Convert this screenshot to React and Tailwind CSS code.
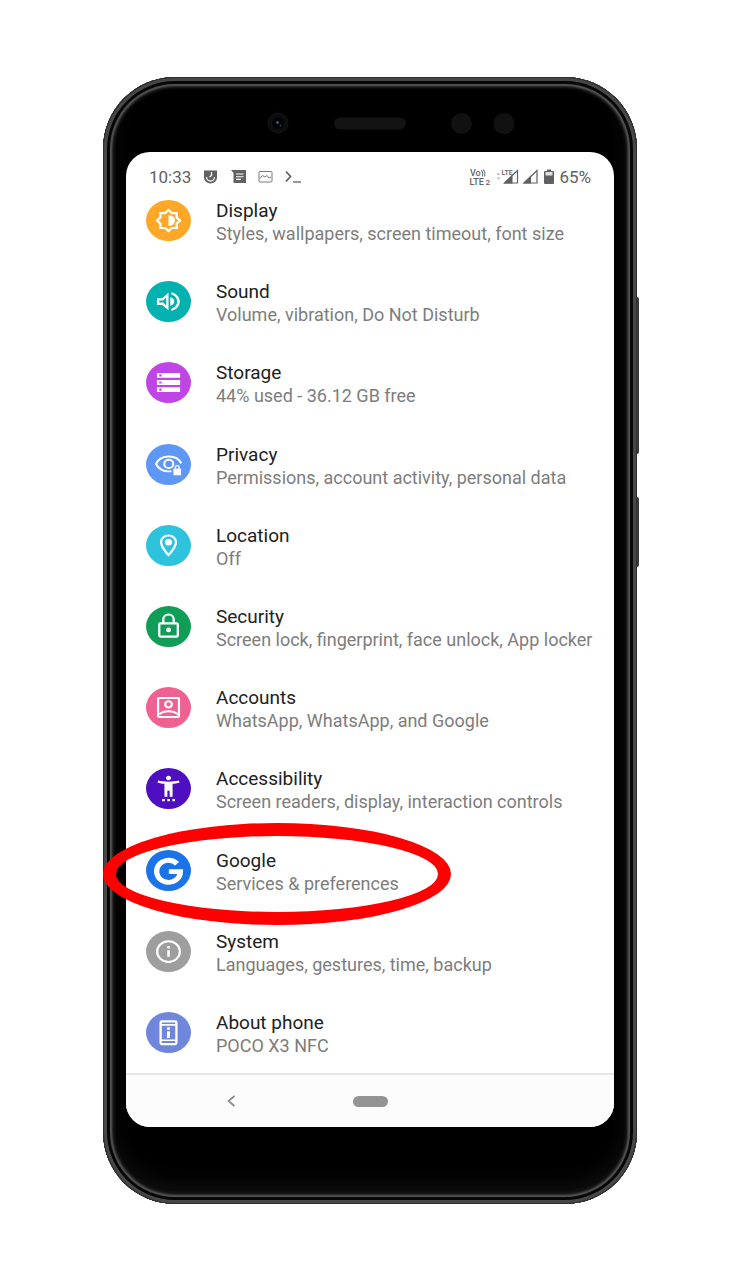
const icons = {
  display: (
    <>
      <path d="M20 8.69V4h-4.69L12 .69 8.69 4H4v4.69L.69 12 4 15.31V20h4.69L12 23.31 15.31 20H20v-4.69L23.31 12 20 8.69zm-2 5.79V18h-3.52L12 20.48 9.52 18H6v-3.52L3.52 12 6 9.52V6h3.52L12 3.52 14.48 6H18v3.52L20.48 12 18 14.48z" />
      <path d="M12 7v10c3.500 0 5.500-2.240 5.500-5s-2-5-5.500-5z" />
    </>
  ),
  sound: (
    <path d="M2 8.800v6.400h4.500l5.500 5V3.800l-5.500 5H2zm8-.6v7.600L7.330 13H4v-2h3.330L10 8.200zM17 12c0-1.770-1.020-3.290-3.500-4.030v8.050c2.480-.73 3.500-2.250 3.500-4.020zM14.500 3.230v2.060c2.890.86 5 3.540 5 6.710s-2.110 5.850-5 6.710v2.060c4.010-.91 7.200-4.490 7.200-8.770s-3.190-7.860-7.200-8.770z" />
  ),
  storage: (
    <path d="M2 21h20v-4.600H2V21zm2-3.300h2v2H4v-2zM2 3v4.600h20V3H2zm4 3.300H4v-2h2v2zM2 14.300h20V9.700H2v4.600zM4 11h2v2H4v-2z" />
  ),
  privacy: (
    <>
      <g fill="none" stroke="#fff" strokeWidth="1.800">
        <path d="M14.500 18.200C7.500 19.500 3 15.500 1.200 11.500 4.500 3 18.500 1.500 23 11" />
        <circle cx="12.200" cy="11.400" r="3.900" />
        <path d="M17.900 16v-1.300a1.600 1.600 0 0 1 3.200 0V16" strokeWidth="1.200" />
      </g>
      <rect x="16.200" y="15.700" width="6.600" height="6.500" rx="0.800" />
    </>
  ),
  location: (
    <>
      <path d="M12 1.500c-4.100 0-7.400 3.300-7.400 7.400C4.600 14.500 12 22.500 12 22.500s7.400-8 7.400-13.600c0-4.100-3.300-7.400-7.400-7.400zM6.600 8.900c0-3 2.400-5.400 5.400-5.400s5.400 2.400 5.400 5.400c0 3.100-3.100 7.600-5.400 10.500-2.300-2.900-5.400-7.500-5.400-10.500z" />
      <circle cx="12" cy="8.900" r="3" />
    </>
  ),
  security: (
    <>
      <g fill="none" stroke="#fff" strokeWidth="2">
        <rect x="4" y="9" width="16" height="12.500" rx="1" />
        <path d="M7.500 9V5.200a4.500 4.500 0 0 1 9 0V9" />
      </g>
      <circle cx="12" cy="15.200" r="2.200" />
    </>
  ),
  accounts: (
    <g fill="none" stroke="#fff" strokeWidth="1.900">
      <rect x="3" y="3" width="18" height="18" rx="1" />
      <circle cx="12" cy="9" r="2.900" />
      <path d="M4 18.500c4-4 12-4 16 0" />
    </g>
  ),
  accessibility: (
    <path d="M21 4.500c-2.610.7-6.170 1-9 1s-6.390-.3-9-1l-.5 2c1.860.5 4.500.830 6 1V19.800h2.500v-5.800h2v5.800h2.500V7.500c1.500-.17 4.140-.5 6-1l-.5-2zM12 4.200c1.300 0 2.200-1 2.200-2.100S13.300 0 12 0s-2.200 1-2.200 2.100.9 2.100 2.200 2.100zM6.500 24h2.300v-2.200H6.500V24zm4.400 0h2.300v-2.200h-2.300V24zm4.400 0h2.300v-2.200h-2.300V24z" />
  ),
  google: (
    <path
      d="M19.400 5.600A10.200 10.400 0 1 0 22.200 13H12.300"
      fill="none"
      stroke="#fff"
      strokeWidth="4.600"
    />
  ),
  system: (
    <>
      <circle cx="12" cy="12" r="9.800" fill="none" stroke="#fff" strokeWidth="1.900" />
      <rect x="10.900" y="10.800" width="2.200" height="6.200" />
      <rect x="10.900" y="6.800" width="2.200" height="2.300" />
    </>
  ),
  phone: (
    <>
      <rect x="5.200" y="1.500" width="13.600" height="21.500" rx="1" fill="none" stroke="#fff" strokeWidth="2" />
      <path d="M5 4h14v1.600H5zM5 18.500h14v1.600H5zM10.700 10.700H13.200v6.400h-2.500zM10.700 7H13.200v2.300h-2.500z" />
    </>
  ),
};

const settings = [
  { icon: "display", color: "fill-[#ffa726]", title: "Display", summary: "Styles, wallpapers, screen timeout, font size" },
  { icon: "sound", color: "fill-[#03b2ae]", title: "Sound", summary: "Volume, vibration, Do Not Disturb" },
  { icon: "storage", color: "fill-[#bf46e4]", title: "Storage", summary: "44% used - 36.12 GB free" },
  { icon: "privacy", color: "fill-[#5e97f6]", title: "Privacy", summary: "Permissions, account activity, personal data" },
  { icon: "location", color: "fill-[#2ec3dc]", title: "Location", summary: "Off" },
  { icon: "security", color: "fill-[#0f9d58]", title: "Security", summary: "Screen lock, fingerprint, face unlock, App locker" },
  { icon: "accounts", color: "fill-[#f06090]", title: "Accounts", summary: "WhatsApp, WhatsApp, and Google" },
  { icon: "accessibility", color: "fill-[#4d0fc0]", title: "Accessibility", summary: "Screen readers, display, interaction controls" },
  { icon: "google", color: "fill-[#1a73e8]", title: "Google", summary: "Services & preferences", circled: true },
  { icon: "system", color: "fill-[#9e9e9e]", title: "System", summary: "Languages, gestures, time, backup" },
  { icon: "phone", color: "fill-[#6e86dc]", title: "About phone", summary: "POCO X3 NFC" },
];

function SettingRow({ icon, color, title, summary, circled }) {
  return (
    <li className="relative">
      <a href={`#${icon}`} className="flex items-center gap-[25px]">
        <svg className="h-[41px] w-[45px] shrink-0" viewBox="0 0 45 41" aria-hidden="true">
          <ellipse cx="22.500" cy="20.500" rx="22.500" ry="20.500" className={color} />
          <g transform="translate(8.600 7.800) scale(1.160 1.060)" fill="#fff">
            {icons[icon]}
          </g>
        </svg>
        <span className="flex flex-col pt-0.5">
          <span className="text-[19px] leading-6 text-[#212121]">{title}</span>
          <span className="text-[18px] leading-[21px] whitespace-nowrap text-[#7d7d7d]">{summary}</span>
        </span>
      </a>
      {circled && (
        <span className="pointer-events-none absolute top-[-24px] left-[-43px] h-[102px] w-[348px] rounded-[50%] border-[13px] border-[#ff0000]" />
      )}
    </li>
  );
}

function StatusBar() {
  return (
    <header className="flex h-[45px] items-start justify-between pt-[13px] pr-[23px] pl-[23px] text-[17px] leading-6 text-[#616161]">
      <div className="flex items-center">
        <time>10:33</time>
        <svg className="ml-3 h-4 w-[100px]" viewBox="0 0 100 16" aria-hidden="true">
          <path d="M1 1.500h13v7a6.500 6 0 0 1-13 0z" fill="#616161" />
          <path d="M3.500 8a4 4 0 0 0 8 0M8.500 3v3.500l-2 1.500" fill="none" stroke="#fff" strokeWidth="1.300" />
          <path d="M28 1h15v13H30.500V4z" fill="#616161" />
          <path d="M33 5h7.500M33 7.700h7.500M33 10.400h5" stroke="#fff" strokeWidth="1.100" />
          <rect x="56" y="2.500" width="13" height="10.500" rx="1" fill="none" stroke="#7a7a7a" />
          <path d="M57 9.500l2.500-3 2.500 1.500 2-1.500 2 2.500 2-1" fill="none" stroke="#7a7a7a" />
          <path d="M83 2.500l4.500 5-4.500 5" fill="none" stroke="#616161" strokeWidth="1.700" />
          <path d="M90 13h8" stroke="#616161" strokeWidth="1.300" />
        </svg>
      </div>
      <div className="flex items-center gap-1">
        <svg className="h-4 w-[86px]" viewBox="0 0 86 16" aria-hidden="true">
          <g fill="#616161" fontFamily="Roboto, sans-serif" fontWeight="500">
            <text x="1" y="7" fontSize="9">Vo</text>
            <text x="0.500" y="15.500" fontSize="9">LTE</text>
            <text x="16.500" y="15.500" fontSize="8">2</text>
            <text x="32.500" y="6" fontSize="7">LTE</text>
          </g>
          <path d="M12.500 1q2 3 1 6.500M14.500 0.500q2.500 4 1 7" fill="none" stroke="#616161" />
          <path d="M27.500 6l2-2.500 2 2.500zM27.500 8.500l2 2.500 2-2.500z" fill="#bdbdbd" />
          <path d="M34.500 14.500l9-8.500v8.500zM54 14.500l8-8v8z" fill="#616161" />
          <path d="M35.500 14l13-12.500V14zM55 14L68 1.500V14z" fill="none" stroke="#616161" strokeWidth="1.200" />
          <rect x="75" y="2" width="10" height="13" rx="1" fill="#616161" />
          <path d="M78 0.500h4V3h-4z" fill="#616161" />
          <path d="M76.500 3h7v3.500h-7z" fill="#e0e0e0" />
        </svg>
        <span>65%</span>
      </div>
    </header>
  );
}

function FrontSensors() {
  return (
    <svg className="h-[75px] w-full" viewBox="0 0 534 75" aria-hidden="true">
      <circle cx="175" cy="46" r="10" fill="#0d0d0d" stroke="#141414" />
      <circle cx="175" cy="46" r="6" fill="#020305" />
      <circle cx="174.500" cy="45.500" r="1.200" fill="#2c7c9c" />
      <circle cx="177.500" cy="48.500" r="1" fill="#17465f" />
      <rect x="231" y="40.500" width="72" height="12" rx="6" fill="#131313" />
      <circle cx="358.500" cy="46.500" r="10.500" fill="#111" />
      <circle cx="401" cy="46.500" r="10.500" fill="#111" />
    </svg>
  );
}

export default function App() {
  return (
    <main className="flex min-h-screen items-start justify-center bg-white pt-[77px] pr-0.5 pb-[76px] font-[Roboto,sans-serif]">
      <div className="relative w-full max-w-[534px]">
        <span className="absolute top-[220px] -right-0.5 h-[157px] w-1 rounded-sm bg-[#3a3a3a]" />
        <span className="absolute top-[420px] -right-0.5 h-[70px] w-1 rounded-sm bg-[#3a3a3a]" />
        <div className="relative rounded-[72px] bg-black shadow-[inset_0_0_0_1px_#2e2e2e,inset_0_0_0_4px_#474747,inset_0_0_1px_7px_#050505,inset_0_0_2px_9px_#5c5c5c,inset_0_0_3px_11px_#1c1c1c,inset_0_-12px_24px_4px_#141414]">
          <FrontSensors />
          <div className="mx-[23px] flex aspect-[488/975] flex-col rounded-3xl bg-white">
            <StatusBar />
            <ul className="flex flex-1 flex-col justify-between pr-2 pb-[17px] pl-5">
              {settings.map((s) => (
                <SettingRow key={s.icon} {...s} />
              ))}
            </ul>
            <nav className="flex h-[54px] items-center rounded-b-3xl border-t-2 border-[#e6e6e6] bg-[#fcfcfc] pl-[97px]">
              <button type="button" aria-label="Back" className="flex h-5 w-4 items-center justify-center">
                <svg className="h-3 w-2.5" viewBox="0 0 10 12" fill="none" stroke="#8a8a8a" strokeWidth="1.700" aria-hidden="true">
                  <path d="M8.500 1L2.500 6l6 5" />
                </svg>
              </button>
              <button type="button" aria-label="Home" className="ml-[114px] h-[11px] w-[35px] rounded-full bg-[#949494]" />
            </nav>
          </div>
          <div className="h-[77px]" />
        </div>
      </div>
    </main>
  );
}
